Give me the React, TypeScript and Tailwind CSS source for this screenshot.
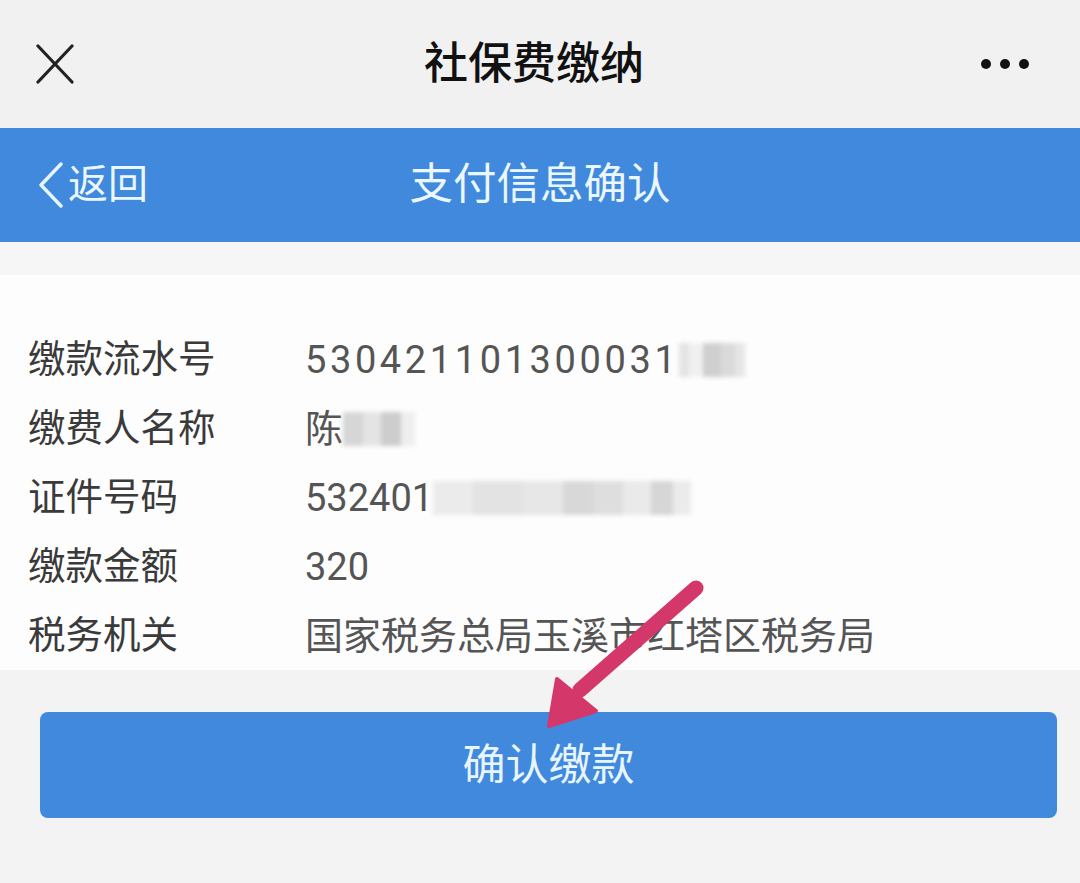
const font = "font-['Roboto','Noto_Sans_CJK_SC',sans-serif]";

const Mosaic = ({ cells }: { cells: { w: number; c: string }[] }) => (
  <span className="inline-flex h-[34px] items-stretch align-middle blur-[2px]">
    {cells.map((cell, i) => (
      <span key={i} style={{ width: cell.w, background: cell.c }} />
    ))}
  </span>
);

const rows = [
  { label: '缴款流水号', value: '530421101300031' },
  { label: '缴费人名称', value: '陈' },
  { label: '证件号码', value: '532401' },
  { label: '缴款金额', value: '320' },
  { label: '税务机关', value: '国家税务总局玉溪市红塔区税务局' },
];

const App = () => {
  return (
    <div className={`relative w-[1080px] h-[883px] overflow-hidden bg-[#f3f3f3] ${font}`}>
      {/* title bar */}
      <div className="h-[128px] bg-[#f1f1f1] grid grid-cols-[1fr_auto_1fr] items-center">
        <div className="pl-[36px]">
          <svg width="38" height="40" viewBox="0 0 38 40">
            <path d="M2 2 L36 38 M36 2 L2 38" stroke="#222" strokeWidth="3.2" strokeLinecap="round" />
          </svg>
        </div>
        <div className="text-[44px] font-medium text-[#111] pr-[12px] leading-none">社保费缴纳</div>
        <div className="flex justify-end pr-[51px] gap-[9px]">
          <span className="w-[10px] h-[10px] rounded-full bg-[#111]" />
          <span className="w-[10px] h-[10px] rounded-full bg-[#111]" />
          <span className="w-[10px] h-[10px] rounded-full bg-[#111]" />
        </div>
      </div>

      {/* blue nav */}
      <div className="h-[114px] bg-[#4189dd] grid grid-cols-[1fr_auto_1fr] items-center text-[#eaf7ff]">
        <div className="flex items-center pl-[38px]">
          <svg width="26" height="46" viewBox="0 0 26 46">
            <path d="M23 2 L3 23 L23 44" fill="none" stroke="#e6f6ff" strokeWidth="3.4" strokeLinecap="round" strokeLinejoin="round" />
          </svg>
          <span className="ml-[4px] text-[40px] leading-none">返回</span>
        </div>
        <div className="text-[43.5px] leading-none">支付信息确认</div>
        <div />
      </div>

      <div className="h-[33px] bg-[#f6f6f6]" />

      {/* info rows */}
      <div className="bg-[#fdfdfd] pt-[50px]">
        {rows.map((r, i) => (
          <div key={r.label} className="h-[69px] flex items-center pl-[28px]">
            <div className="w-[277px] text-[37.5px] text-[#3a3a3a] leading-none">{r.label}</div>
            <div className="flex items-center text-[38px] text-[#555] leading-none">
              <span className={i === 0 ? 'tracking-[3.6px]' : ''}>{r.value}</span>
              {i === 0 && (
                <Mosaic
                  cells={[
                    { w: 10, c: '#e4e4e4' },
                    { w: 14, c: '#f0f0f0' },
                    { w: 18, c: '#cfcfcf' },
                    { w: 14, c: '#dadada' },
                    { w: 10, c: '#e6e6e6' },
                  ]}
                />
              )}
              {i === 1 && (
                <Mosaic
                  cells={[
                    { w: 20, c: '#d6d6d6' },
                    { w: 18, c: '#e4e4e4' },
                    { w: 20, c: '#cdcdcd' },
                    { w: 14, c: '#eeeeee' },
                  ]}
                />
              )}
              {i === 2 && (
                <Mosaic
                  cells={[
                    { w: 40, c: '#ebebeb' },
                    { w: 50, c: '#e3e3e3' },
                    { w: 40, c: '#e7e7e7' },
                    { w: 30, c: '#d8d8d8' },
                    { w: 30, c: '#dedede' },
                    { w: 28, c: '#eaeaea' },
                    { w: 22, c: '#d6d6d6' },
                    { w: 18, c: '#ebebeb' },
                  ]}
                />
              )}
            </div>
          </div>
        ))}
      </div>

      {/* button */}
      <div className="pt-[42px] pl-[40px] pr-[23px]">
        <button className="w-full h-[106px] rounded-[8px] bg-[#4189dd] text-[#e8f5ff] text-[43px] leading-none flex items-center justify-center">
          确认缴款
        </button>
      </div>

      {/* annotation arrow */}
      <svg className="absolute inset-0 pointer-events-none" width="1080" height="883" viewBox="0 0 1080 883">
        <line x1="696" y1="588" x2="580" y2="690" stroke="#d4376a" strokeWidth="15" strokeLinecap="round" />
        <polygon points="557,679 596,711 549,726" fill="#d4376a" stroke="#d4376a" strokeWidth="4" strokeLinejoin="round" />
      </svg>
    </div>
  );
};

export default App;
